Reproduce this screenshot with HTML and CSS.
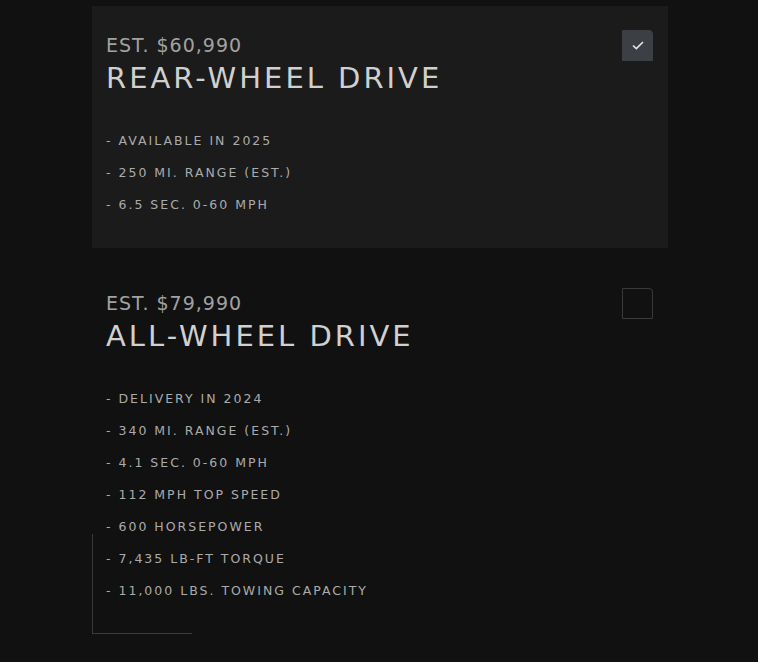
FILE: index.html
```html
<!DOCTYPE html>
<html>
<head>
<meta charset="utf-8">
<link rel="stylesheet" href="styles.css">
</head>
<body>
<div class="options">
  <div class="option selected">
    <div class="head">
      <div class="titles">
        <div class="price">EST. $60,990</div>
        <div class="name">REAR-WHEEL DRIVE</div>
      </div>
      <div class="box checked">
        <svg width="12" height="9" viewBox="0 0 12 9"><path d="M1 4.5 L4.3 7.6 L11 1" fill="none" stroke="#e6e6e6" stroke-width="1.6"/></svg>
      </div>
    </div>
    <ul class="specs">
      <li>- AVAILABLE IN 2025</li>
      <li>- 250 MI. RANGE (EST.)</li>
      <li>- 6.5 SEC. 0-60 MPH</li>
    </ul>
  </div>
  <div class="option">
    <div class="head">
      <div class="titles">
        <div class="price">EST. $79,990</div>
        <div class="name">ALL-WHEEL DRIVE</div>
      </div>
      <div class="box"></div>
    </div>
    <ul class="specs">
      <li>- DELIVERY IN 2024</li>
      <li>- 340 MI. RANGE (EST.)</li>
      <li>- 4.1 SEC. 0-60 MPH</li>
      <li>- 112 MPH TOP SPEED</li>
      <li>- 600 HORSEPOWER</li>
      <li>- 7,435 LB-FT TORQUE</li>
      <li>- 11,000 LBS. TOWING CAPACITY</li>
    </ul>
  </div>
  <div class="corner"></div>
</div>
</body>
</html>
```
FILE: styles.css
```css
html, body {
  margin: 0;
  padding: 0;
  background: #111111;
  height: 100%;
  overflow: hidden;
}
body {
  font-family: "DejaVu Sans", sans-serif;
}
.options {
  position: relative;
  width: 576px;
  margin-left: 92px;
  padding-top: 6px;
  display: flex;
  flex-direction: column;
  gap: 16px;
}
.option {
  padding: 27px 15px 0 14px;
  box-sizing: border-box;
  height: 242px;
}
.option.selected {
  background: #1b1b1b;
}
.head {
  display: flex;
  justify-content: space-between;
  align-items: flex-start;
}
.price {
  font-size: 19px;
  line-height: 24px;
  color: #a2a2a2;
  letter-spacing: 1px;
}
.name {
  margin-top: 3px;
  font-size: 29px;
  line-height: 36px;
  color: #d0d0d0;
  letter-spacing: 3px;
}
.box {
  width: 31px;
  height: 31px;
  box-sizing: border-box;
  border: 1px solid #3a3a3a;
  border-top-right-radius: 4px;
  margin-top: -3px;
  display: flex;
  align-items: center;
  justify-content: center;
}
.box.checked {
  background: #3c3f44;
  border-color: #3c3f44;
}
.specs {
  list-style: none;
  margin: 29px 0 0 0;
  padding: 0;
}
.specs li {
  font-size: 12.5px;
  line-height: 32px;
  color: #ababab;
  letter-spacing: 2px;
}
.corner {
  position: absolute;
  left: 0;
  top: 534px;
  width: 99px;
  height: 99px;
  border-left: 1px solid #3a3a3a;
  border-bottom: 1px solid #3a3a3a;
}
```
